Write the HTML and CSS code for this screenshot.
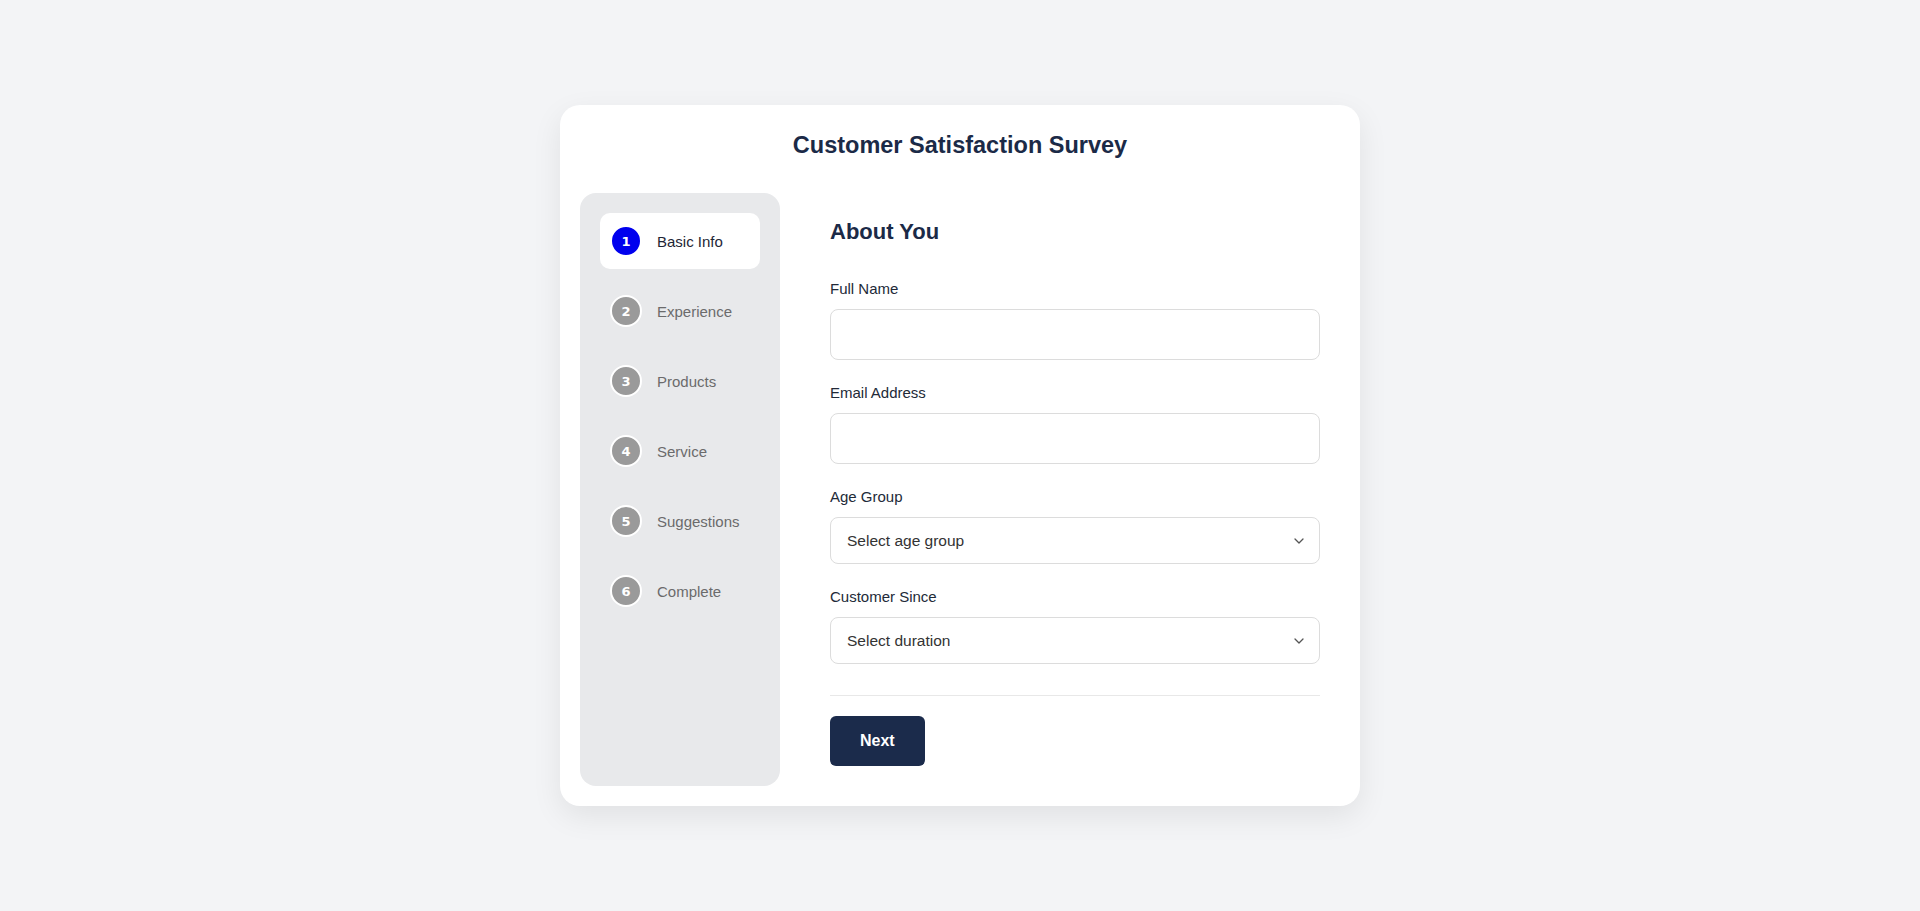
FILE: index.html
```html
<!DOCTYPE html>
<html lang="en">
<head>
<meta charset="utf-8">
<title>Customer Satisfaction Survey</title>
<link rel="stylesheet" href="styles.css">
</head>
<body>
<div class="card">
  <h1 class="title">Customer Satisfaction Survey</h1>
  <div class="layout">
    <aside class="steps">
      <div class="step active"><span class="num">1</span><span class="label">Basic Info</span></div>
      <div class="step"><span class="num">2</span><span class="label">Experience</span></div>
      <div class="step"><span class="num">3</span><span class="label">Products</span></div>
      <div class="step"><span class="num">4</span><span class="label">Service</span></div>
      <div class="step"><span class="num">5</span><span class="label">Suggestions</span></div>
      <div class="step"><span class="num">6</span><span class="label">Complete</span></div>
    </aside>
    <main class="form">
      <h2 class="heading">About You</h2>
      <div class="field">
        <label class="field-label">Full Name</label>
        <input class="text-input" type="text">
      </div>
      <div class="field">
        <label class="field-label">Email Address</label>
        <input class="text-input" type="email">
      </div>
      <div class="field">
        <label class="field-label">Age Group</label>
        <div class="select-wrap">
          <select class="select"><option>Select age group</option></select>
          <svg class="chev" width="10" height="6" viewBox="0 0 10 6"><path d="M1 1l4 4 4-4" fill="none" stroke="#555" stroke-width="1.3" stroke-linecap="round" stroke-linejoin="round"/></svg>
        </div>
      </div>
      <div class="field">
        <label class="field-label">Customer Since</label>
        <div class="select-wrap">
          <select class="select"><option>Select duration</option></select>
          <svg class="chev" width="10" height="6" viewBox="0 0 10 6"><path d="M1 1l4 4 4-4" fill="none" stroke="#555" stroke-width="1.3" stroke-linecap="round" stroke-linejoin="round"/></svg>
        </div>
      </div>
      <div class="actions">
        <button class="btn">Next</button>
      </div>
    </main>
  </div>
</div>
</body>
</html>
```

FILE: styles.css
```css
* { box-sizing: border-box; }
html, body { height: 100%; }
body {
  margin: 0;
  background: #f3f4f6;
  font-family: "Liberation Sans", Arial, sans-serif;
  display: flex;
  align-items: center;
  justify-content: center;
}
.card {
  width: 800px;
  background: #fff;
  border-radius: 20px;
  padding: 20px;
  box-shadow: 0 10px 30px rgba(0, 0, 0, 0.08);
}
.title {
  margin: 6px 0 34px;
  text-align: center;
  font-size: 23.5px;
  line-height: 28px;
  font-weight: 700;
  color: #1b2a47;
}
.layout {
  display: flex;
  gap: 30px;
}
.steps {
  width: 200px;
  flex: none;
  background: #e8e9eb;
  border-radius: 16px;
  padding: 20px;
}
.step {
  display: flex;
  align-items: center;
  gap: 15px;
  padding: 12px 10px;
  border-radius: 10px;
  margin-bottom: 14px;
}
.step.active { background: #fff; }
.num {
  width: 32px;
  height: 32px;
  border-radius: 50%;
  border: 2px solid #fff;
  background: #9a9a9a;
  color: #fff;
  font-family: "DejaVu Sans", sans-serif;
  font-weight: 700;
  font-size: 13px;
  display: flex;
  align-items: center;
  justify-content: center;
  flex: none;
}
.step.active .num { background: #0000ee; }
.label {
  font-size: 15px;
  color: #6b6b6b;
}
.step.active .label { color: #1e2636; }
.form {
  flex: 1;
  padding: 20px;
}
.heading {
  margin: 6px 0 33px;
  font-size: 22px;
  line-height: 26px;
  font-weight: 700;
  color: #1b2a47;
}
.field { margin-bottom: 22px; }
.field:last-of-type { margin-bottom: 0; }
.field-label {
  display: block;
  font-size: 15px;
  line-height: 22px;
  margin-bottom: 9px;
  color: #222a38;
}
.text-input {
  display: block;
  width: 100%;
  height: 51px;
  border: 1px solid #dcdcdc;
  border-radius: 8px;
  background: #fff;
  font: inherit;
  padding: 0 16px;
}
.select-wrap { position: relative; }
.select {
  display: block;
  width: 100%;
  height: 47px;
  border: 1px solid #dcdcdc;
  border-radius: 8px;
  background: #fff;
  font-family: inherit;
  font-size: 15.5px;
  color: #333;
  padding: 0 16px;
  appearance: none;
  -webkit-appearance: none;
}
.chev {
  position: absolute;
  right: 16px;
  top: 21px;
}
.actions {
  margin-top: 31px;
  border-top: 1px solid #e8e8e8;
  padding-top: 20px;
}
.btn {
  height: 50px;
  padding: 0 30px;
  border: none;
  border-radius: 6px;
  background: #1b2b4b;
  color: #fff;
  font-family: inherit;
  font-size: 16px;
  font-weight: 700;
}
```
